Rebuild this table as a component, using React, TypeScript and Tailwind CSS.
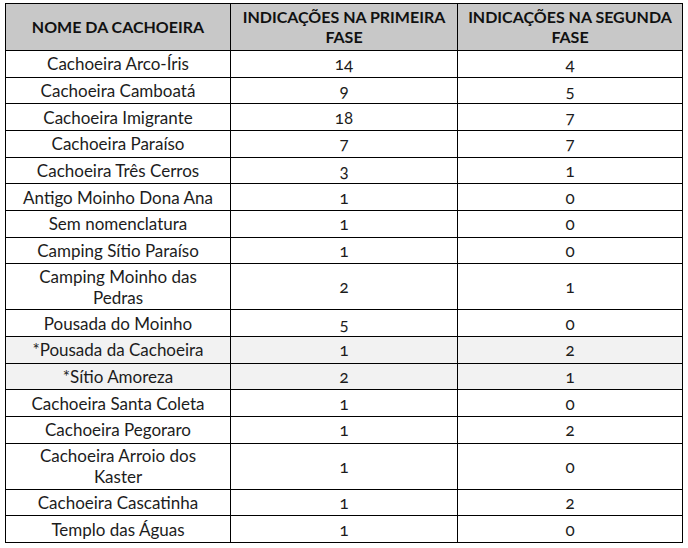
import React from "react";

type Row = { name: React.ReactNode; a: string; b: string; shaded?: boolean; tall?: boolean };

const rows: Row[] = [
  { name: "Cachoeira Arco-Íris", a: "14", b: "4" },
  { name: "Cachoeira Camboatá", a: "9", b: "5" },
  { name: "Cachoeira Imigrante", a: "18", b: "7" },
  { name: "Cachoeira Paraíso", a: "7", b: "7" },
  { name: "Cachoeira Três Cerros", a: "3", b: "1" },
  { name: "Antigo Moinho Dona Ana", a: "1", b: "0" },
  { name: "Sem nomenclatura", a: "1", b: "0" },
  { name: "Camping Sítio Paraíso", a: "1", b: "0" },
  { name: <>Camping Moinho das<br />Pedras</>, a: "2", b: "1", tall: true },
  { name: "Pousada do Moinho", a: "5", b: "0" },
  { name: "*Pousada da Cachoeira", a: "1", b: "2", shaded: true },
  { name: "*Sítio Amoreza", a: "2", b: "1", shaded: true },
  { name: "Cachoeira Santa Coleta", a: "1", b: "0" },
  { name: "Cachoeira Pegoraro", a: "1", b: "2" },
  { name: <>Cachoeira Arroio dos<br />Kaster</>, a: "1", b: "0", tall: true },
  { name: "Cachoeira Cascatinha", a: "1", b: "2" },
  { name: "Templo das Águas", a: "1", b: "0" },
];

export default function App() {
  return (
    <div className="w-[688px] h-[548px] bg-white pl-[5px] pt-[3px]" style={{ fontFamily: "Lato, 'Open Sans', sans-serif" }}>
      <table className="border-collapse text-[17px] leading-[21px] text-[#1c1c1c] [font-variant-numeric:oldstyle-nums]">
        <colgroup>
          <col className="w-[225px]" />
          <col className="w-[227px]" />
          <col className="w-[225px]" />
        </colgroup>
        <thead>
          <tr className="h-[47px] bg-[#c8c8c8] font-bold text-[16px] leading-[20px] text-[#111]">
            <th className="border-[1.5px] border-black text-center align-middle p-0">NOME DA CACHOEIRA</th>
            <th className="border-[1.5px] border-black text-center align-middle p-0">INDICAÇÕES NA PRIMEIRA<br />FASE</th>
            <th className="border-[1.5px] border-black text-center align-middle p-0">INDICAÇÕES NA SEGUNDA<br />FASE</th>
          </tr>
        </thead>
        <tbody>
          {rows.map((r, i) => (
            <tr key={i} className={`${r.tall ? "h-[46px]" : "h-[26.67px]"} ${r.shaded ? "bg-[#f2f2f2]" : "bg-white"}`}>
              <td className="border-[1.5px] border-black text-center align-middle p-0">{r.name}</td>
              <td className="border-[1.5px] border-black text-center align-middle p-0">{r.a}</td>
              <td className="border-[1.5px] border-black text-center align-middle p-0">{r.b}</td>
            </tr>
          ))}
        </tbody>
      </table>
    </div>
  );
}
